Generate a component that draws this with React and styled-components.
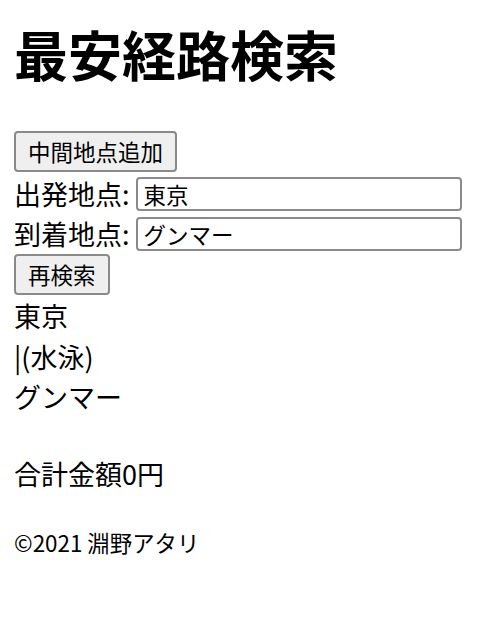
import React from "react";
import styled, { createGlobalStyle } from "styled-components";

const GlobalStyle = createGlobalStyle`
  html, body {
    margin: 0;
    background: #fff;
  }
  body {
    font-family: "Noto Sans CJK JP", "Noto Sans", sans-serif;
    color: #000;
  }
`;

const Page = styled.div`
  padding: 14px;
  font-size: 27px;
  line-height: 40.5px;
`;

const Title = styled.h1`
  font-size: 54px;
  line-height: 80px;
  font-weight: 700;
  margin: 0 0 37px;
`;

const ButtonRow = styled.div`
  display: flex;
  align-items: flex-start;
  height: ${(p) => p.height || 41}px;
`;

const Button = styled.button`
  font-family: inherit;
  font-size: 22.5px;
  line-height: 1;
  height: 41px;
  padding: 0 12px;
  background: #efefef;
  color: #000;
  border: 2px solid #8a8a8a;
  border-radius: 4px;
`;

const FieldRow = styled.div`
  display: flex;
  align-items: center;
  height: 40px;
  gap: 6px;
`;

const Label = styled.label`
  white-space: nowrap;
`;

const Input = styled.input`
  box-sizing: border-box;
  width: 326px;
  height: 34px;
  font-family: inherit;
  font-size: 22.5px;
  padding: 0 6px;
  border: 2px solid #8a8a8a;
  border-radius: 4px;
  color: #000;
  background: #fff;
`;

const Route = styled.div`
  margin-bottom: 36px;
`;

const Step = styled.div``;

const Total = styled.p`
  margin: 0 0 32px;
`;

const Footer = styled.footer`
  font-size: 22.4px;
  line-height: 32px;
`;

export default function App() {
  const route = ["東京", "|(水泳)", "グンマー"];
  return (
    <>
      <GlobalStyle />
      <Page>
        <Title>最安経路検索</Title>
        <ButtonRow height={43}>
          <Button>中間地点追加</Button>
        </ButtonRow>
        <FieldRow>
          <Label>出発地点:</Label>
          <Input defaultValue="東京" />
        </FieldRow>
        <FieldRow>
          <Label>到着地点:</Label>
          <Input defaultValue="グンマー" />
        </FieldRow>
        <ButtonRow height={42}>
          <Button>再検索</Button>
        </ButtonRow>
        <Route>
          {route.map((s, i) => (
            <Step key={i}>{s}</Step>
          ))}
        </Route>
        <Total>合計金額0円</Total>
        <Footer>©2021 淵野アタリ</Footer>
      </Page>
    </>
  );
}
